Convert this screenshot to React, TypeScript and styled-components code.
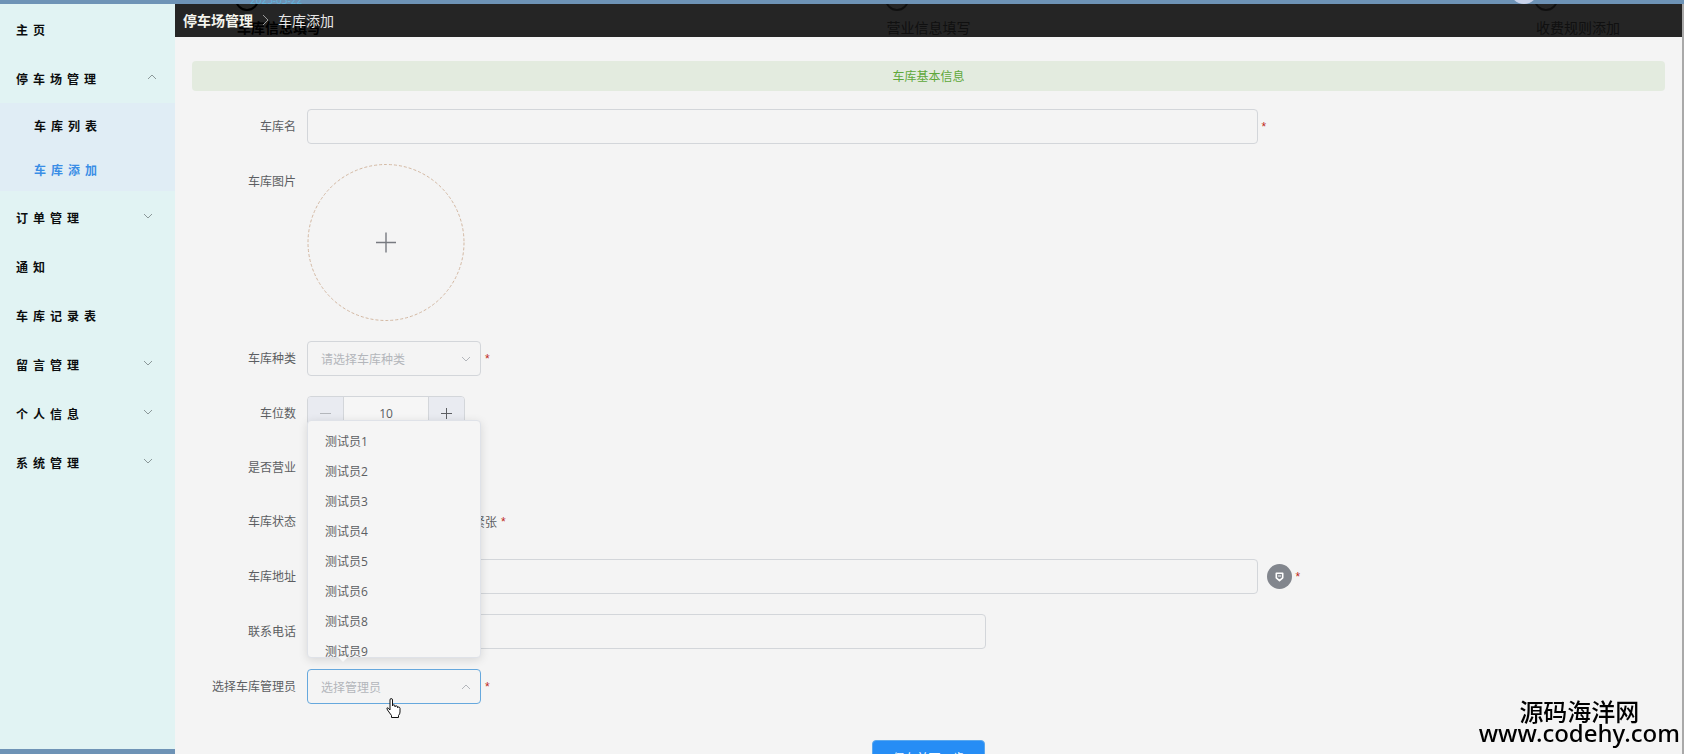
import React from 'react';
import styled, { createGlobalStyle } from 'styled-components';

const GlobalStyle = createGlobalStyle`
  *, *::before, *::after { box-sizing: border-box; }
  body {
    margin: 0;
    overflow: hidden;
    font-family: "Open Sans", "Noto Sans CJK SC", sans-serif;
    font-size: 12px;
    color: #5c5e62;
    background: #6e93b6;
  }
  button, input { font: inherit; color: inherit; }
`;

const Page = styled.div`
  display: flex;
  flex-direction: column;
  height: 100vh;
`;

const TopBar = styled.header`
  display: flex;
  justify-content: space-between;
  align-items: flex-end;
  flex: none;
  height: 4px;
  padding: 0 146px 0 250px;
  overflow: hidden;
  background: #6e93b6;
`;

const DateText = styled.time`
  font-size: 10px;
  line-height: 8px;
  color: #62b4dc;
`;

const Avatar = styled.span`
  flex: none;
  width: 28px;
  height: 28px;
  border-radius: 50%;
  background: #c9d3ea;
`;

const Body = styled.div`
  display: flex;
  flex: 1;
  min-height: 0;
`;

const Sidebar = styled.nav`
  flex: none;
  width: 175px;
  margin-bottom: 5px;
  padding-top: 1px;
  background: #e1f3f3;
`;

const MenuButton = styled.button`
  display: flex;
  align-items: center;
  justify-content: space-between;
  width: 100%;
  height: 49px;
  padding: 0 22px 0 16px;
  border: 0;
  background: none;
  font-weight: 700;
  letter-spacing: 5px;
  color: #0b0d0e;
  text-align: left;
  cursor: pointer;

  &[aria-expanded="true"] { padding-right: 18px; }

  svg { margin-bottom: 4px; }
`;

const SubMenu = styled.div`
  margin-bottom: 2px;
  background: #e0edf5;
`;

const SubLink = styled.a<{ $active?: boolean }>`
  display: flex;
  align-items: center;
  height: 44px;
  padding: 2px 0 0 34px;
  font-weight: 700;
  letter-spacing: 5px;
  text-decoration: none;
  color: ${p => (p.$active ? '#3a8ee6' : '#0b0d0e')};
`;

const Main = styled.main`
  position: relative;
  flex: 1;
  min-width: 0;
  overflow: hidden;
  background: #f4f4f4;
  border-right: 2px solid #a9a9a9;
`;

const Breadcrumb = styled.nav`
  position: absolute;
  inset: 0 0 auto 0;
  display: flex;
  align-items: center;
  gap: 8px;
  height: 33px;
  padding: 0 8px 2px;
  font-size: 14px;
  color: #e6e6e6;
  background: rgba(0, 0, 0, 0.85);

  a {
    font-weight: 700;
    color: #f5f5ee;
    text-decoration: none;
  }
`;

const Steps = styled.ol`
  display: flex;
  align-items: flex-end;
  height: 33px;
  margin: 0;
  padding: 0 62px 0 60px;
  overflow: hidden;
  list-style: none;
`;

const Step = styled.li<{ $current?: boolean }>`
  flex: 1;
  font-size: 14px;
  line-height: 18px;
  white-space: nowrap;
  font-weight: ${p => (p.$current ? 700 : 400)};
  color: ${p => (p.$current ? '#000' : '#6c6c6c')};

  &:last-child { flex: none; }

  &::before {
    content: "";
    display: block;
    width: 24px;
    height: 24px;
    margin-bottom: 8px;
    border: 2px solid currentColor;
    border-radius: 50%;
  }

  span { padding-left: 2px; }
`;

const Content = styled.div`
  padding: 24px 17px 0;
`;

const SectionTitle = styled.h2`
  margin: 0 0 18px;
  padding-top: 2px;
  border-radius: 4px;
  font-size: 12px;
  font-weight: 400;
  line-height: 28px;
  text-align: center;
  color: #5ea83a;
  background: #e3ebdf;
`;

const Form = styled.form`
  display: flex;
  flex-direction: column;
  gap: 20px;
`;

const Row = styled.div<{ $compact?: boolean }>`
  display: flex;
  min-height: ${p => (p.$compact ? 34 : 35)}px;
`;

const Label = styled.label`
  flex: none;
  width: 115px;
  padding: 2px 11px 0 0;
  line-height: 32px;
  text-align: right;
`;

const Control = styled.div`
  display: flex;
  flex: 1;
  align-items: center;
  gap: 4px;
`;

const Required = styled.span`
  height: 18px;
  font-family: "Liberation Sans", sans-serif;
  font-size: 12px;
  line-height: 18px;
  color: #c0281a;
`;

const TextInput = styled.input<{ $width: string }>`
  width: ${p => p.$width};
  height: 35px;
  padding: 0 14px;
  border: 1px solid #d3d6da;
  border-radius: 4px;
  background: transparent;
  outline: 0;
`;

const Upload = styled.button`
  display: grid;
  place-items: center;
  width: 158px;
  height: 157px;
  padding: 0;
  border: 0;
  background: none;
  cursor: pointer;
`;

const Select = styled.div`
  position: relative;
  width: 174px;
`;

const SelectButton = styled.button<{ $open?: boolean }>`
  display: flex;
  align-items: center;
  justify-content: space-between;
  width: 100%;
  height: 35px;
  padding: 0 9px 0 13px;
  border: 1px solid ${p => (p.$open ? '#66a8dd' : '#d3d6da')};
  border-radius: 4px;
  background: transparent;
  color: #b3b6bb;
  cursor: pointer;
`;

const Popup = styled.div`
  position: absolute;
  bottom: 46px;
  left: 0;
  width: 100%;
  height: 238px;
  border: 1px solid #dfe2e8;
  border-radius: 4px;
  background: #f5f5f5;
  box-shadow: 0 2px 10px rgba(0, 0, 0, 0.12);

  &::after {
    content: "";
    position: absolute;
    top: 100%;
    left: 30px;
    border: 5px solid transparent;
    border-top-color: #f8f8f8;
    border-bottom: 0;
  }
`;

const Options = styled.ul`
  height: 100%;
  margin: 0;
  padding: 6px 0 0;
  overflow: hidden;
  list-style: none;
`;

const Option = styled.li`
  padding-left: 17px;
  line-height: 30px;
`;

const NumberBox = styled.div`
  display: flex;
  width: 158px;
  height: 34px;
  border: 1px solid #d3d6da;
  border-radius: 4px;
  overflow: hidden;

  input {
    flex: 1;
    min-width: 0;
    padding: 0;
    border: 0;
    outline: 0;
    text-align: center;
    background: #f6f6f6;
  }
`;

const StepButton = styled.button<{ $side: 'left' | 'right' }>`
  display: grid;
  place-items: center;
  width: 36px;
  padding: 0;
  border: 0;
  border-${p => (p.$side === 'left' ? 'right' : 'left')}: 1px solid #d3d6da;
  background: #e9ebf1;
`;

const Switch = styled.input`
  width: 40px;
  height: 20px;
  margin: 0;
`;

const RadioGroup = styled.div`
  display: flex;
  justify-content: flex-end;
  width: 190px;

  label {
    display: flex;
    align-items: center;
    gap: 8px;
  }

  input { margin: 0; }
`;

const PlaceButton = styled.button`
  display: grid;
  place-items: center;
  width: 25px;
  height: 25px;
  margin-left: 5px;
  padding: 0;
  border: 0;
  border-radius: 50%;
  background: #82868d;
`;

const Actions = styled.div`
  display: flex;
  justify-content: center;
  padding-top: 16px;
`;

const Submit = styled.button`
  height: 35px;
  padding: 0 19px;
  border: 1px solid #5aa8ee;
  border-radius: 4px;
  color: #fff;
  background: #268df5;
`;

const Watermark = styled.aside`
  position: fixed;
  right: 4px;
  bottom: 11px;
  color: #000;
  font-family: "Noto Sans", "Noto Sans CJK SC", sans-serif;
  font-size: 24px;
  font-weight: 500;
  line-height: 21px;
  text-align: center;
`;

const Pointer = styled.svg`
  position: absolute;
  top: 29px;
  left: 79px;
  pointer-events: none;
`;

const Chevron = ({ up, color = '#8b9899' }: { up?: boolean; color?: string }) => (
  <svg width="10" height="10" viewBox="0 0 10 10" fill="none" stroke={color} aria-hidden="true">
    <path d={up ? 'M1 7 5 3 9 7' : 'M1 3 5 7 9 3'} />
  </svg>
);

const laterMenu = [
  { name: '订单管理', group: true },
  { name: '通知', group: false },
  { name: '车库记录表', group: false },
  { name: '留言管理', group: true },
  { name: '个人信息', group: true },
  { name: '系统管理', group: true },
];

const managers = [1, 2, 3, 4, 5, 6, 8, 9];

export default function App() {
  return (
    <Page>
      <GlobalStyle />
      <TopBar>
        <DateText>2023-03-22</DateText>
        <Avatar />
      </TopBar>
      <Body>
        <Sidebar>
          <MenuButton>主页</MenuButton>
          <MenuButton aria-expanded="true">停车场管理<Chevron up /></MenuButton>
          <SubMenu>
            <SubLink href="#list">车库列表</SubLink>
            <SubLink href="#add" $active>车库添加</SubLink>
          </SubMenu>
          {laterMenu.map(item => (
            <MenuButton key={item.name}>{item.name}{item.group && <Chevron />}</MenuButton>
          ))}
        </Sidebar>
        <Main>
          <Steps>
            <Step $current><span>车库信息填写</span></Step>
            <Step><span>营业信息填写</span></Step>
            <Step><span>收费规则添加</span></Step>
          </Steps>
          <Breadcrumb>
            <a href="#parking">停车场管理</a>
            <svg width="9" height="12" viewBox="0 0 9 12" fill="none" stroke="#9a9a9a" aria-hidden="true">
              <path d="M2 1 7 6 2 11" />
            </svg>
            <span>车库添加</span>
          </Breadcrumb>
          <Content>
            <SectionTitle>车库基本信息</SectionTitle>
            <Form onSubmit={e => e.preventDefault()}>
              <Row>
                <Label htmlFor="name">车库名</Label>
                <Control>
                  <TextInput id="name" $width="70%" />
                  <Required>*</Required>
                </Control>
              </Row>
              <Row>
                <Label htmlFor="image">车库图片</Label>
                <Control>
                  <Upload id="image" type="button">
                    <svg width="158" height="157" viewBox="0 0 158 157" fill="none" aria-hidden="true">
                      <circle cx="79" cy="78.5" r="78" stroke="#d3b8a2" strokeDasharray="3 2" />
                      <path d="M79 68.500v20M69 78.500h20" stroke="#777a80" strokeWidth="1.400" />
                    </svg>
                  </Upload>
                </Control>
              </Row>
              <Row>
                <Label htmlFor="kind">车库种类</Label>
                <Control>
                  <Select>
                    <SelectButton id="kind" type="button">请选择车库种类<Chevron color="#b3b6bb" /></SelectButton>
                  </Select>
                  <Required>*</Required>
                </Control>
              </Row>
              <Row $compact>
                <Label htmlFor="spaces">车位数</Label>
                <Control>
                  <NumberBox>
                    <StepButton type="button" $side="left" aria-label="减少">
                      <svg width="11" height="11" viewBox="0 0 11 11" stroke="#b3b6bb"><path d="M0 5.500h11" /></svg>
                    </StepButton>
                    <input id="spaces" defaultValue="10" />
                    <StepButton type="button" $side="right" aria-label="增加">
                      <svg width="11" height="11" viewBox="0 0 11 11" stroke="#5c5e62"><path d="M0 5.500h11M5.500 0v11" /></svg>
                    </StepButton>
                  </NumberBox>
                </Control>
              </Row>
              <Row $compact>
                <Label htmlFor="open">是否营业</Label>
                <Control><Switch id="open" type="checkbox" role="switch" /></Control>
              </Row>
              <Row>
                <Label as="span">车库状态</Label>
                <Control>
                  <RadioGroup role="radiogroup" aria-label="车库状态">
                    <label><input type="radio" name="state" />紧张</label>
                  </RadioGroup>
                  <Required>*</Required>
                </Control>
              </Row>
              <Row>
                <Label htmlFor="address">车库地址</Label>
                <Control>
                  <TextInput id="address" $width="70%" />
                  <PlaceButton type="button" aria-label="定位">
                    <svg width="9" height="10" viewBox="0 0 9 10" fill="none" stroke="#fff" strokeWidth="1.600" strokeLinejoin="round">
                      <path d="M1.300 1.200h6.400v4.600L4.500 8.600 1.300 5.800z" />
                      <path d="M3 4h3" strokeWidth="1" />
                    </svg>
                  </PlaceButton>
                  <Required>*</Required>
                </Control>
              </Row>
              <Row>
                <Label htmlFor="phone">联系电话</Label>
                <Control><TextInput id="phone" $width="50%" /></Control>
              </Row>
              <Row>
                <Label htmlFor="manager">选择车库管理员</Label>
                <Control>
                  <Select>
                    <SelectButton id="manager" type="button" aria-expanded="true" $open>
                      选择管理员<Chevron up color="#b3b6bb" />
                    </SelectButton>
                    <Popup>
                      <Options>
                        {managers.map(n => <Option key={n}>测试员{n}</Option>)}
                      </Options>
                    </Popup>
                    <Pointer width="16" height="20" viewBox="0 0 16 20" fill="#fff" stroke="#111" strokeLinejoin="round" aria-hidden="true">
                      <path d="M4 12V2q0-1.500 1.200-1.500T6.500 2v6q0-1.200 1.200-1.200T9 8v.8q.2-1 1.300-1t1.200 1.200v.7q.2-.7 1.200-.7t1.300 1.300V14q0 2-1.500 3.500v2H5.500v-2L1.500 12Q.5 10.200 1.200 9.800T4 12z" />
                    </Pointer>
                  </Select>
                  <Required>*</Required>
                </Control>
              </Row>
              <Actions>
                <Submit type="submit">保存并下一步</Submit>
              </Actions>
            </Form>
          </Content>
        </Main>
      </Body>
      <Watermark>
        <div>源码海洋网</div>
        <div>www.codehy.com</div>
      </Watermark>
    </Page>
  );
}
